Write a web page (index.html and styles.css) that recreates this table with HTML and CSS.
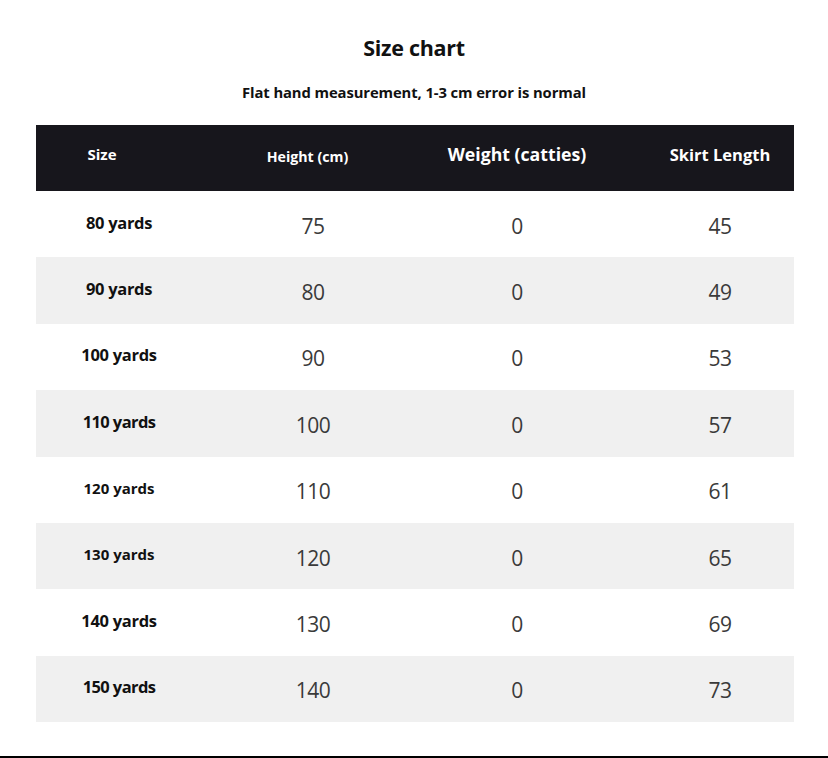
FILE: index.html
```html
<!DOCTYPE html>
<html lang="en">
<head>
<meta charset="utf-8">
<title>Size chart</title>
<link rel="stylesheet" href="styles.css">
</head>
<body>
<div class="page">
  <h1 class="title">Size chart</h1>
  <p class="subtitle">Flat hand measurement, 1-3 cm error is normal</p>
  <div class="table">
    <div class="row head">
      <div class="cell c1 h-size">Size</div>
      <div class="cell c2 h-height">Height (cm)</div>
      <div class="cell c3 h-weight">Weight (catties)</div>
      <div class="cell c4 h-skirt">Skirt Length</div>
    </div>
    <div class="row">
      <div class="cell c1 label">80 yards</div>
      <div class="cell c2 num">75</div>
      <div class="cell c3 num">0</div>
      <div class="cell c4 num">45</div>
    </div>
    <div class="row alt">
      <div class="cell c1 label">90 yards</div>
      <div class="cell c2 num">80</div>
      <div class="cell c3 num">0</div>
      <div class="cell c4 num">49</div>
    </div>
    <div class="row">
      <div class="cell c1 label">100 yards</div>
      <div class="cell c2 num">90</div>
      <div class="cell c3 num">0</div>
      <div class="cell c4 num">53</div>
    </div>
    <div class="row alt">
      <div class="cell c1 label tight">110 yards</div>
      <div class="cell c2 num">100</div>
      <div class="cell c3 num">0</div>
      <div class="cell c4 num">57</div>
    </div>
    <div class="row">
      <div class="cell c1 label small">120 yards</div>
      <div class="cell c2 num">110</div>
      <div class="cell c3 num">0</div>
      <div class="cell c4 num">61</div>
    </div>
    <div class="row alt">
      <div class="cell c1 label small">130 yards</div>
      <div class="cell c2 num">120</div>
      <div class="cell c3 num">0</div>
      <div class="cell c4 num">65</div>
    </div>
    <div class="row">
      <div class="cell c1 label">140 yards</div>
      <div class="cell c2 num">130</div>
      <div class="cell c3 num">0</div>
      <div class="cell c4 num">69</div>
    </div>
    <div class="row alt">
      <div class="cell c1 label tight">150 yards</div>
      <div class="cell c2 num">140</div>
      <div class="cell c3 num">0</div>
      <div class="cell c4 num">73</div>
    </div>
  </div>
</div>
<div class="bottom-line"></div>
</body>
</html>
```

FILE: styles.css
```css
html, body {
  margin: 0;
  padding: 0;
  background: #ffffff;
}
body {
  width: 828px;
  height: 758px;
  overflow: hidden;
  font-family: "Open Sans", "Noto Sans", sans-serif;
  color: #111;
  display: flex;
  flex-direction: column;
}
.page {
  flex: 1;
  display: flex;
  flex-direction: column;
  align-items: center;
}
.title {
  margin: 33px 0 0 0;
  font-size: 21.5px;
  line-height: 30px;
  font-weight: 700;
  letter-spacing: -0.3px;
  color: #111;
}
.subtitle {
  margin: 19px 0 0 0;
  font-size: 14.8px;
  line-height: 20px;
  font-weight: 700;
  letter-spacing: -0.1px;
  color: #111;
}
.table {
  margin-top: 23px;
  width: 758px;
  align-self: flex-start;
  margin-left: 36px;
  display: flex;
  flex-direction: column;
}
.row {
  display: grid;
  grid-template-columns: 166px 222px 186px 184px;
  height: 66.4px;
  align-items: center;
  background: #ffffff;
}
.row.alt {
  background: #f0f0f0;
}
.row.head {
  height: 66px;
  background: #17161c;
  color: #ffffff;
}
.cell {
  text-align: center;
  white-space: nowrap;
}
.c4 {
  padding-left: 36px;
}
.head .cell {
  font-weight: 700;
}
.h-size {
  font-size: 15px;
  padding-right: 34px;
  margin-top: -8px;
}
.h-height {
  font-size: 14.2px;
  padding-right: 11px;
  margin-top: -4px;
}
.h-weight {
  font-size: 17.7px;
  margin-top: -8px;
}
.h-skirt {
  font-size: 16.5px;
  margin-top: -8px;
}
.label {
  font-size: 16.5px;
  font-weight: 700;
  color: #111;
  letter-spacing: -0.3px;
  margin-top: -4px;
}
.label.tight {
  letter-spacing: -0.6px;
}
.label.small {
  font-size: 15px;
  letter-spacing: 0;
}
.num {
  font-size: 21px;
  font-weight: 400;
  color: #3a3a3a;
  letter-spacing: -0.5px;
  margin-top: 3px;
}
.bottom-line {
  height: 2px;
  background: #000;
  flex: none;
}
```
